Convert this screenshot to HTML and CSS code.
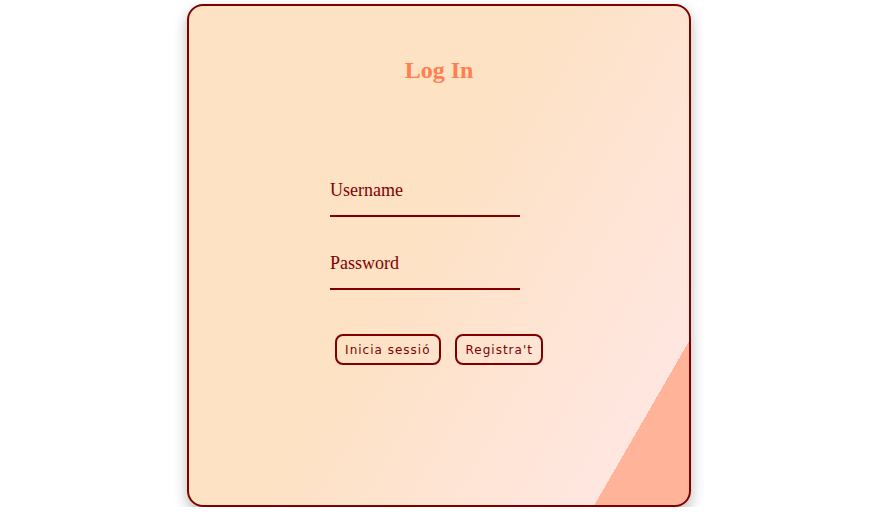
FILE: index.html
```html
<!DOCTYPE html>
<html>
<head>
<meta charset="utf-8">
<link rel="stylesheet" href="styles.css">
</head>
<body>
<div class="page">
  <div class="card">
    <h1 class="title">Log In</h1>
    <form class="form">
      <input class="field" type="text" placeholder="Username">
      <input class="field" type="password" placeholder="Password">
      <div class="actions">
        <button type="button" class="btn">Inicia sessió</button>
        <button type="button" class="btn">Registra't</button>
      </div>
    </form>
  </div>
</div>
</body>
</html>
```
FILE: styles.css
```css
html, body {
  margin: 0;
  padding: 0;
  background: #ffffff;
}
.page {
  display: flex;
  justify-content: center;
  padding: 4px 13px 0 0;
}
.card {
  width: 500px;
  height: 499px;
  border: 2px solid #800000;
  border-radius: 16px;
  box-shadow: 0 6px 14px rgba(0, 0, 0, 0.28);
  background: linear-gradient(120deg, #fde2c4 0%, #fde2c4 45%, #ffe6e0 88%, #ffb399 88%, #ffb399 100%);
  display: flex;
  flex-direction: column;
  align-items: center;
  font-family: "Liberation Serif", "Times New Roman", serif;
}
.title {
  margin: 50px 0 0 0;
  font-size: 24px;
  font-weight: bold;
  color: #ff7f50;
  line-height: 28px;
}
.form {
  margin-top: 92px;
  width: 218px;
  display: flex;
  flex-direction: column;
  align-items: flex-start;
}
.field {
  width: 190px;
  box-sizing: border-box;
  border: none;
  border-bottom: 2px solid #800000;
  background: transparent;
  font-family: "Liberation Serif", "Times New Roman", serif;
  font-size: 18px;
  color: #800000;
  padding: 4px 0 14px 0;
  margin: 0 0 32px 0;
  outline: none;
}
.field::placeholder {
  color: #800000;
  opacity: 1;
}
.actions {
  align-self: center;
  display: flex;
  gap: 14px;
  margin-top: 12px;
}
.btn {
  font-family: "DejaVu Sans", Verdana, sans-serif;
  font-size: 12px;
  letter-spacing: 1px;
  color: #800000;
  background: transparent;
  border: 2px solid #800000;
  border-radius: 8px;
  padding: 5px 8.5px;
  height: 31px;
  cursor: pointer;
}
```
